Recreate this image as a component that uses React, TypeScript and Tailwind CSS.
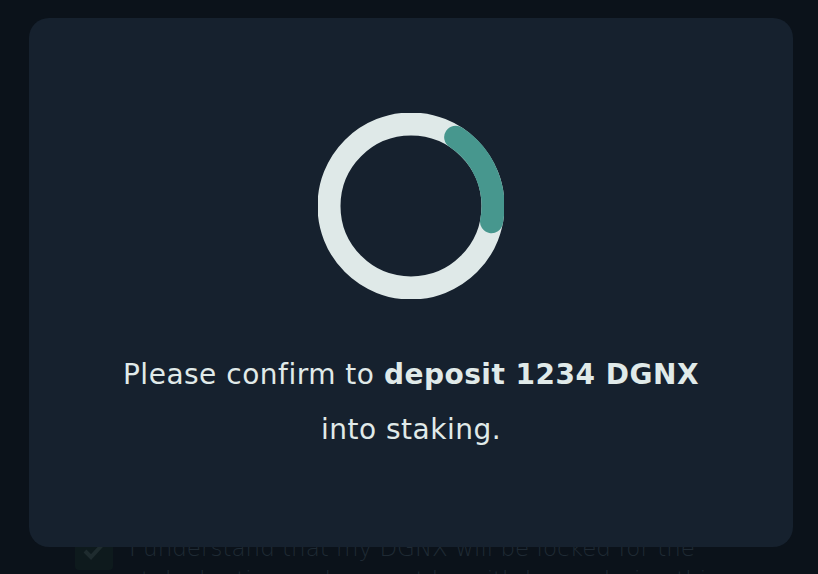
import React from "react";

const Spinner: React.FC = () => {
  const r = 82;
  const cx = 93;
  const cy = 93;
  const a0 = (-57 * Math.PI) / 180;
  const a1 = (11 * Math.PI) / 180;
  const x0 = cx + r * Math.cos(a0);
  const y0 = cy + r * Math.sin(a0);
  const x1 = cx + r * Math.cos(a1);
  const y1 = cy + r * Math.sin(a1);
  return (
    <svg width="186" height="186" viewBox="0 0 186 186">
      <circle cx={cx} cy={cy} r={r} fill="none" stroke="#dfe9e8" strokeWidth="23" />
      <path
        d={`M ${x0} ${y0} A ${r} ${r} 0 0 1 ${x1} ${y1}`}
        fill="none"
        stroke="#47978e"
        strokeWidth="23"
        strokeLinecap="round"
      />
    </svg>
  );
};

export default function App() {
  return (
    <div
      className="relative h-[574px] w-full overflow-hidden bg-[#0b121a]"
      style={{ fontFamily: '"DejaVu Sans", "Open Sans", sans-serif' }}
    >
      {/* page behind the overlay */}
      <div className="h-full pl-[75px] pt-[532px]">
        <div className="flex items-start gap-[16px]">
          <div className="flex h-[38px] w-[38px] shrink-0 items-center justify-center rounded-[4px] bg-[#0e1a1d]">
            <svg width="22" height="18" viewBox="0 0 22 18">
              <path d="M2 9 L8 15 L20 2" fill="none" stroke="#1e2b2e" strokeWidth="4" />
            </svg>
          </div>
          <p className="text-[23px] font-extralight leading-[32px] text-[#1f2a34]">
            I understand that my DGNX will be locked for the
            <br />
            staked ration and can not be withdrawn during this
          </p>
        </div>
      </div>

      {/* modal */}
      <div className="absolute left-[29px] right-[25px] top-[18px] flex h-[529px] flex-col items-center rounded-[20px] bg-[#16212e] pt-[95px]">
        <Spinner />
        <p className="mt-[48px] text-center text-[28px] leading-[55px] tracking-[0.5px] text-[#e0eae9]">
          Please confirm to <span className="font-bold">deposit 1234 DGNX</span>
          <br />
          into staking.
        </p>
      </div>
    </div>
  );
}
